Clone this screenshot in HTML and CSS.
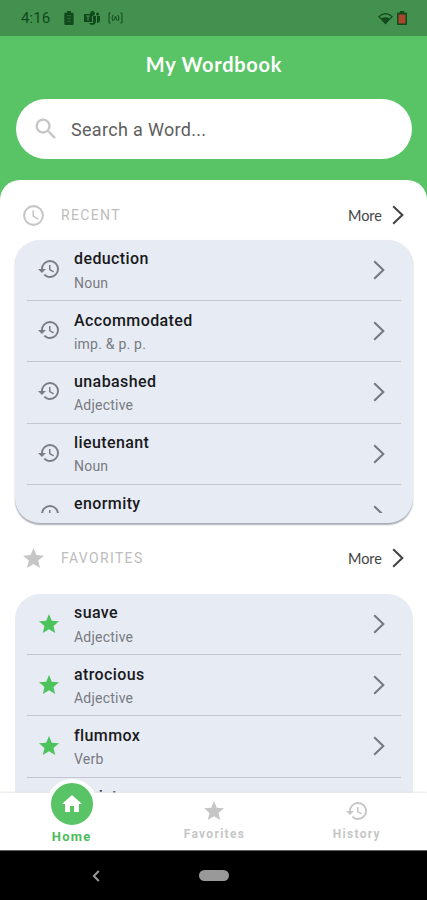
FILE: index.html
```html
<!DOCTYPE html>
<html lang="en">
<head>
<meta charset="utf-8">
<title>My Wordbook</title>
<link rel="stylesheet" href="styles.css">
</head>
<body>
<svg width="0" height="0" class="defs">
  <symbol id="history" viewBox="0 0 24 24"><path d="M13 3a9 9 0 0 0-9 9H1l3.89 3.89.07.14L9 12H6c0-3.87 3.13-7 7-7s7 3.13 7 7-3.13 7-7 7c-1.93 0-3.68-.79-4.94-2.06l-1.42 1.42C8.27 19.99 10.51 21 13 21a9 9 0 0 0 0-18zm-1 5v5l4.28 2.54.72-1.21-3.5-2.08V8z"/></symbol>
  <symbol id="star" viewBox="0 0 24 24"><path d="M12 17.27 18.18 21l-1.64-7.03L22 9.24l-7.19-.61L12 2 9.19 8.63 2 9.24l5.46 4.73L5.82 21z"/></symbol>
  <symbol id="clock" viewBox="0 0 24 24"><path d="M12 2a10 10 0 1 0 0 20 10 10 0 0 0 0-20zm0 18a8 8 0 1 1 0-16 8 8 0 0 1 0 16zm.5-13H11v6l5.25 3.15.75-1.23-4.5-2.67z"/></symbol>
  <symbol id="chevron" viewBox="0 0 12 20"><path d="M1.2 1.2 10.3 10l-9.1 8.8" fill="none" stroke="currentColor" stroke-width="2.1"/></symbol>
</svg>
<div class="phone">
  <div class="status">
    <span class="time">4:16</span>
    <svg class="s-batt" viewBox="0 0 10 15"><path d="M3 0h4v2h2q1 0 1 1v11q0 1-1 1H1q-1 0-1-1V3q0-1 1-1h2z"/><path d="M3 5h4M3 8h4M3 11h4" stroke="#2c7139" fill="none"/></svg>
    <svg class="s-teams" viewBox="0 0 16 14"><circle cx="8.5" cy="2.5" r="2.4"/><circle cx="13.6" cy="3" r="1.6"/><path d="M0 3h8v8H0zM9 5h3v6q-1 3-4 3-2 0-3-2h4zM13 5h3v4q0 3-3 3z"/><path d="M2 5h4M4 5v4.500" stroke="#43904f" fill="none" stroke-width="1.2"/></svg>
    <svg class="s-cast" viewBox="0 0 15 12"><path d="M2.500 1H1v10h1.500M5 3Q3 6 5 9M12.500 1H14v10h-1.500M10 3Q12 6 10 9M6 8.500 7.500 4 9 8.500" fill="none" stroke="currentColor" stroke-width="1"/></svg>
    <svg class="s-wifi" viewBox="0 0 16 13"><path d="M1 4.500Q8-2 15 4.500L8 12z" fill="none" stroke="currentColor" stroke-width="1.4"/><path d="M3.500 6.200Q8 4 12.500 6.200L8 12z"/></svg>
    <svg class="s-low" viewBox="0 0 10 14"><path d="M3 0h4v1.500h2q1 0 1 1V13q0 1-1 1H1q-1 0-1-1V2.500q0-1 1-1h2z"/><path d="M1.500 3.500h7v9h-7z" fill="#a8472c"/></svg>
  </div>
  <header class="header">
    <h1>My Wordbook</h1>
    <div class="search">
      <svg viewBox="0 0 24 24"><path d="M15.500 14h-.79l-.28-.27A6.500 6.500 0 1 0 13.730 14.430l.27.28v.79l5 4.990L20.490 19zm-6 0a4.500 4.500 0 1 1 0-9 4.500 4.500 0 0 1 0 9z"/></svg>
      <span>Search a Word...</span>
    </div>
  </header>
  <main class="sheet">
    <div class="section-head">
      <svg class="lead"><use href="#clock"/></svg><h2>RECENT</h2><span class="more">More</span><svg class="chev"><use href="#chevron"/></svg>
    </div>
    <section class="card recent">
      <div class="list">
        <div class="row"><svg class="icon"><use href="#history"/></svg><div class="word"><b>deduction</b><span>Noun</span></div><svg class="chev"><use href="#chevron"/></svg></div>
        <div class="row"><svg class="icon"><use href="#history"/></svg><div class="word"><b>Accommodated</b><span>imp. &amp; p. p.</span></div><svg class="chev"><use href="#chevron"/></svg></div>
        <div class="row"><svg class="icon"><use href="#history"/></svg><div class="word"><b>unabashed</b><span>Adjective</span></div><svg class="chev"><use href="#chevron"/></svg></div>
        <div class="row"><svg class="icon"><use href="#history"/></svg><div class="word"><b>lieutenant</b><span>Noun</span></div><svg class="chev"><use href="#chevron"/></svg></div>
        <div class="row"><svg class="icon"><use href="#history"/></svg><div class="word"><b>enormity</b></div><svg class="chev"><use href="#chevron"/></svg></div>
      </div>
    </section>
    <div class="section-head fav-head">
      <svg class="lead"><use href="#star"/></svg><h2>FAVORITES</h2><span class="more">More</span><svg class="chev"><use href="#chevron"/></svg>
    </div>
    <section class="card favorites">
      <div class="row"><svg class="icon star"><use href="#star"/></svg><div class="word"><b>suave</b><span>Adjective</span></div><svg class="chev"><use href="#chevron"/></svg></div>
      <div class="row"><svg class="icon star"><use href="#star"/></svg><div class="word"><b>atrocious</b><span>Adjective</span></div><svg class="chev"><use href="#chevron"/></svg></div>
      <div class="row"><svg class="icon star"><use href="#star"/></svg><div class="word"><b>flummox</b><span>Verb</span></div><svg class="chev"><use href="#chevron"/></svg></div>
      <div class="row"><svg class="icon star"><use href="#star"/></svg><div class="word"><b>purist</b></div></div>
    </section>
  </main>
  <nav class="tabs">
    <div class="tab active"><span class="bubble"><svg viewBox="0 0 24 24"><path d="M10 20v-6h4v6h5v-8h3L12 3 2 12h3v8z"/></svg></span><span>Home</span></div>
    <div class="tab"><svg><use href="#star"/></svg><span>Favorites</span></div>
    <div class="tab"><svg><use href="#history"/></svg><span>History</span></div>
  </nav>
  <footer class="sysbar">
    <svg viewBox="0 0 8 12"><path d="M6.800 1 1.800 6l5 5" fill="none" stroke="currentColor" stroke-width="2"/></svg>
    <span class="pill"></span>
  </footer>
</div>
</body>
</html>
```
FILE: styles.css
```css
* { box-sizing: border-box; }
body { margin: 0; font-family: Roboto, sans-serif; background: #fff; }
svg { display: block; flex: none; fill: currentColor; }
.defs { position: absolute; }
.phone { width: 427px; height: 900px; display: flex; flex-direction: column; overflow: hidden; background: #59c466; }
.status { height: 36px; flex: none; display: flex; align-items: center; padding: 0 20px 0 21px; background: #43904f; color: #104a1c; }
.time { width: 43px; font-size: 15px; letter-spacing: .1px; }
.s-batt { width: 10px; height: 14px; }
.s-teams { width: 16px; height: 14px; margin-left: 10px; }
.s-cast { width: 15px; height: 12px; margin-left: 8px; }
.s-wifi { width: 15px; height: 13px; margin-left: auto; }
.s-low { width: 10px; height: 14px; margin-left: 4px; }
.header { height: 144px; flex: none; padding: 0 15px 0 16px; }
h1 { margin: 0; height: 63px; padding-top: 14px; text-align: center; color: #fff; font: 700 20px/28px Lato, sans-serif; letter-spacing: .75px; }
.search { height: 60px; border-radius: 30px; background: #fff; display: flex; align-items: center; padding-left: 16px; color: #c6c6c6; }
.search svg { width: 28px; height: 28px; }
.search span { margin-left: 11px; font-size: 18px; color: #5e5e5e; letter-spacing: .32px; }
.sheet { flex: 1; min-height: 0; overflow: hidden; background: #fff; border-radius: 20px 20px 0 0; padding: 0 14px 0 15px; }
.section-head { height: 60px; display: flex; align-items: center; padding: 10px 9px 0 6px; color: #c6c6c6; }
.lead { width: 25px; height: 25px; }
h2 { margin: 0 auto 0 15px; font-size: 14px; font-weight: 400; letter-spacing: 1.35px; color: #bdbdbd; }
.more { font: 14.500px Lato, sans-serif; color: #444; letter-spacing: 0; }
.chev { width: 12px; height: 20px; color: #444; margin-left: 10px; }
.card { background: #e7ebf4; border-radius: 25px; padding: 0 12px; }
.recent { height: 283px; box-shadow: 0 1.500px 1.500px #aaaeb5; }
.list { height: 273px; overflow: hidden; }
.row { height: 61.200px; border-bottom: 1.500px solid #c3c6cd; display: flex; align-items: flex-start; }
.icon { width: 24px; height: 24px; margin: 17px 0 0 10px; color: #7b7d82; }
.icon.star { color: #4dc35e; margin: 18px 0 0 10px; }
.word { margin: 9.400px 0 0 13px; flex: 1; display: flex; flex-direction: column; }
.word b { font-size: 16px; line-height: 20px; font-weight: 500; color: #191a1c; letter-spacing: .4px; }
.word span { font-size: 14px; line-height: 18px; margin-top: 4.500px; color: #777a80; letter-spacing: .22px; }
.row .chev { margin: 20px 16px 0 0; color: #777a80; }
.fav-head { height: 71px; padding-bottom: 11px; }
.favorites { height: 283px; }
.tabs { height: 57px; flex: none; background: #fff; display: grid; grid-template-columns: repeat(3, 1fr); position: relative; z-index: 1; box-shadow: 0 -1px 2px #e6e6e8; }
.tab { display: flex; flex-direction: column; align-items: center; color: #c6c6c6; font-size: 12px; font-weight: 700; letter-spacing: 1.300px; padding: 6px 0 0 2px; }
.tab > svg { width: 24px; height: 24px; margin-bottom: 4px; }
.active { color: #4dbd5b; padding: 0 0 0 1px; font-size: 13px; }
.bubble { width: 50px; height: 50px; margin: -14px 0 0; border-radius: 50%; background: #59c466; border: 4px solid #fff; color: #fff; display: grid; place-items: center; }
.bubble svg { width: 24px; height: 24px; }
.sysbar { height: 50px; flex: none; background: #000; display: flex; align-items: center; padding-left: 92px; color: #999; border-top: 1px solid #555; }
.sysbar svg { width: 8px; height: 12px; }
.pill { width: 30px; height: 11px; border-radius: 6px; background: #999; margin-left: 99px; }
.phone .tabs { margin-top: 0; }
```
